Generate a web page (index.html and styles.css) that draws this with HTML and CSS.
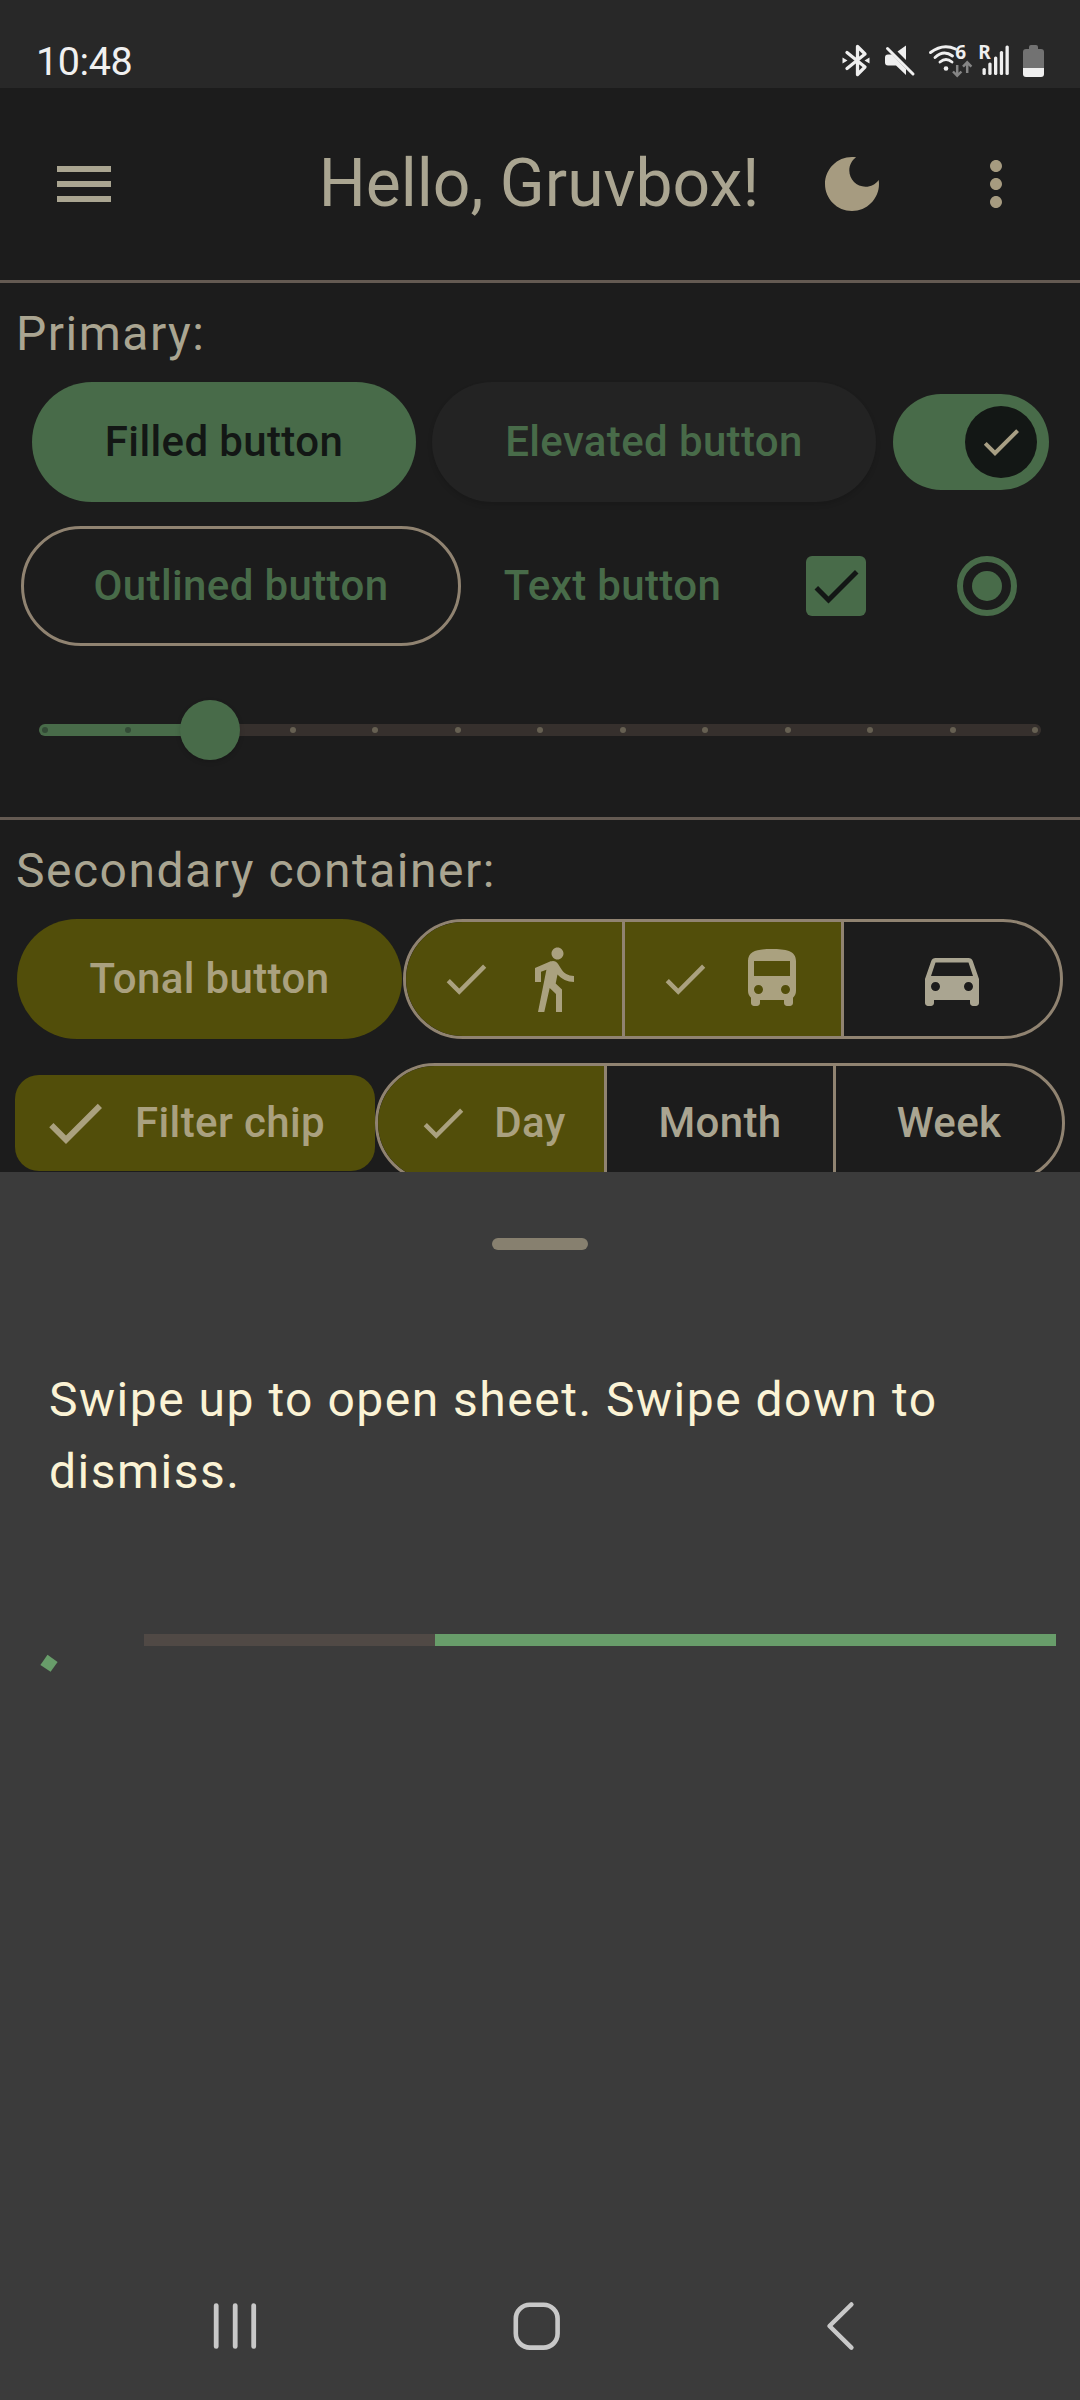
FILE: index.html
```html
<!DOCTYPE html>
<html lang="en">
<head>
<meta charset="utf-8">
<title>Hello, Gruvbox!</title>
<link rel="stylesheet" href="styles.css">
</head>
<body>
<svg class="defs" aria-hidden="true">
  <symbol id="check" viewBox="0 0 24 24"><path d="M9 16.170L4.830 12l-1.420 1.410L9 19 21 7l-1.410-1.410L9 16.170z"/></symbol>
</svg>
<div class="phone">
  <header class="status">
    <span class="clock">10:48</span>
    <svg class="status-icons" viewBox="0 0 210 40" width="210" height="40">
      <g fill="none" stroke="#efefef" stroke-width="3.300" stroke-linecap="round" stroke-linejoin="round">
        <path d="M7 12.500L25 27 17.500 34.500V6.500L25 14 7 28.500"/>
        <path d="M90.500 12.500Q103 3 115.500 9M95 17.500Q103.500 9.500 112.500 16M100 22Q106 17 112 22" stroke-width="2.900"/>
      </g>
      <g fill="#efefef">
        <path d="M2.500 17.500L7.500 20.500 2.500 23.500zM29.500 17.500L24.500 20.500 29.500 23.500z"/>
        <path d="M48 14.500H52L66 29V35L56 25.500H48Q45 25.500 45 22.500V17.500Q45 14.500 48 14.500zM57.500 11.500L66 5.500V20z"/>
        <circle cx="106" cy="28.500" r="2.300"/>
        <rect x="142.500" y="28" width="3.300" height="7" rx="1.500"/>
        <rect x="148.300" y="22.500" width="3.300" height="12.500" rx="1.500"/>
        <rect x="154" y="16.500" width="3.300" height="18.500" rx="1.500"/>
        <rect x="159.800" y="11" width="3.300" height="24" rx="1.500"/>
        <rect x="165.500" y="5.500" width="3.300" height="29.500" rx="1.500"/>
        <path d="M183 28H204V34Q204 37 201 37H186Q183 37 183 34z"/>
      </g>
      <path d="M47.500 8.500L73 34" stroke="#efefef" stroke-width="3" stroke-linecap="round"/>
      <path d="M183 28V12Q183 9 186 9H189V7Q189 5 191 5H196Q198 5 198 7V9H201Q204 9 204 12V28z" fill="#727272"/>
      <path d="M117.200 25V35.500M113 31.500L117.200 35.800 121.400 31.500M127.200 33V22.500M123 26.700L127.200 22.400 131.400 26.700" fill="none" stroke="#858585" stroke-width="2.500"/>
      <text x="115.200" y="19.300" class="tiny">6</text>
      <text x="138.300" y="19.300" class="tiny">R</text>
    </svg>
  </header>

  <div class="appbar">
    <svg class="i72" viewBox="0 0 24 24"><path d="M3 18h18v-2H3v2zm0-5h18v-2H3v2zm0-7v2h18V6H3z"/></svg>
    <h1 class="title">Hello, Gruvbox!</h1>
    <div class="actions">
      <svg class="i72" viewBox="0 0 24 24"><path d="M12 3c-4.970 0-9 4.030-9 9s4.030 9 9 9 9-4.030 9-9c0-.46-.04-.92-.1-1.360-.98 1.370-2.580 2.260-4.400 2.260-2.980 0-5.400-2.420-5.400-5.400 0-1.810.89-3.420 2.260-4.400-.44-.06-.9-.1-1.360-.1z"/></svg>
      <svg class="i72" viewBox="0 0 24 24"><path d="M12 8c1.100 0 2-.9 2-2s-.9-2-2-2-2 .9-2 2 .9 2 2 2zm0 2c-1.100 0-2 .9-2 2s.9 2 2 2 2-.9 2-2-.9-2-2-2zm0 6c-1.100 0-2 .9-2 2s.9 2 2 2 2-.9 2-2-.9-2-2-2z"/></svg>
    </div>
  </div>

  <section class="section primary">
    <h2 class="label">Primary:</h2>
    <div class="row row-a">
      <div class="btn filled">Filled button</div>
      <div class="btn elevated">Elevated button</div>
      <div class="switch"><div class="thumb"><svg class="i48"><use href="#check"/></svg></div></div>
    </div>
    <div class="row row-b">
      <div class="btn outlined">Outlined button</div>
      <div class="btn text">Text button</div>
      <div class="checkbox"><svg class="i60"><use href="#check"/></svg></div>
      <div class="radio"><div class="radio-dot"></div></div>
    </div>
    <div class="slider">
      <div class="track">
        <i class="tick on"></i><i class="tick on"></i><i class="knob"></i><i class="tick"></i><i class="tick"></i><i class="tick"></i><i class="tick"></i><i class="tick"></i><i class="tick"></i><i class="tick"></i><i class="tick"></i><i class="tick"></i><i class="tick"></i>
      </div>
    </div>
  </section>

  <section class="section secondary">
    <h2 class="label">Secondary container:</h2>
    <div class="row row-c">
      <div class="btn tonal">Tonal button</div>
      <div class="segments seg-icons">
        <div class="seg on"><svg class="i54"><use href="#check"/></svg><svg class="i72" viewBox="0 0 24 24"><path d="M13.500 5.500c1.100 0 2-.9 2-2s-.9-2-2-2-2 .9-2 2 .9 2 2 2zM9.800 8.900L7 23h2.100l1.800-8 2.100 2v6h2v-7.500l-2.100-2 .6-3C14.800 12 16.800 13 19 13v-2c-1.900 0-3.500-1-4.300-2.400l-1-1.600c-.4-.6-1-1-1.700-1-.3 0-.5.1-.8.1L6 8.300V13h2V9.600l1.800-.7"/></svg></div>
        <div class="seg on"><svg class="i54"><use href="#check"/></svg><svg class="i72" viewBox="0 0 24 24"><path d="M4 16c0 .88.39 1.670 1 2.220V20c0 .55.45 1 1 1h1c.55 0 1-.45 1-1v-1h8v1c0 .55.45 1 1 1h1c.55 0 1-.45 1-1v-1.780c.61-.55 1-1.340 1-2.220V6c0-3.500-3.580-4-8-4s-8 .5-8 4v10zm3.500 1c-.83 0-1.500-.67-1.500-1.500S6.670 14 7.500 14s1.500.67 1.500 1.500S8.330 17 7.500 17zm9 0c-.83 0-1.500-.67-1.500-1.500s.67-1.500 1.500-1.500 1.500.67 1.500 1.500-.67 1.500-1.500 1.500zm1.500-6H6V6h12v5z"/></svg></div>
        <div class="seg"><svg class="i72" viewBox="0 0 24 24"><path d="M18.920 6.010C18.720 5.420 18.160 5 17.500 5h-11c-.66 0-1.210.42-1.420 1.010L3 12v8c0 .55.45 1 1 1h1c.55 0 1-.45 1-1v-1h12v1c0 .55.45 1 1 1h1c.55 0 1-.45 1-1v-8l-2.080-5.990zM6.500 16c-.83 0-1.500-.67-1.500-1.500S5.670 13 6.500 13s1.500.67 1.500 1.500S7.330 16 6.500 16zm11 0c-.83 0-1.500-.67-1.500-1.500s.67-1.500 1.500-1.500 1.500.67 1.500 1.500-.67 1.500-1.500 1.500zM5 11l1.500-4.500h11L19 11H5z"/></svg></div>
      </div>
    </div>
    <div class="row row-d">
      <div class="chip"><svg class="i72"><use href="#check"/></svg><span class="cap">Filter chip</span></div>
      <div class="segments seg-dates">
        <div class="seg on"><svg class="i54"><use href="#check"/></svg><span class="cap">Day</span></div>
        <div class="seg"><span class="cap">Month</span></div>
        <div class="seg"><span class="cap">Week</span></div>
      </div>
    </div>
  </section>

  <main class="sheet">
    <div class="handle"></div>
    <p class="message">Swipe up to open sheet. Swipe down to dismiss.</p>
    <div class="progress">
      <svg class="spinner" viewBox="0 0 104 64" width="104" height="64"><path d="M7.500 44.700L17.600 52 10.600 61.800.4 55z"/></svg>
      <div class="bar"><div class="bar-fill"></div></div>
    </div>
    <nav class="nav">
      <svg viewBox="0 0 54 54" width="54" height="54"><path d="M8.200 4.600V45.400M27.200 4.600V45.400M45.700 4.600V45.400" stroke-width="4.800"/></svg>
      <svg viewBox="0 0 54 54" width="54" height="54"><rect x="2.800" y="3.700" width="41.800" height="42.900" rx="14" stroke-width="4.600"/></svg>
      <svg viewBox="0 0 54 54" width="54" height="54"><path d="M33.400 3.500L11.500 25 33.400 46.700" stroke-width="4.500"/></svg>
    </nav>
  </main>
</div>
</body>
</html>
```
FILE: styles.css
```css
* { box-sizing: border-box; }

body {
  margin: 0;
  background: #1c1c1c;
  font-family: Roboto, "Noto Sans", sans-serif;
  color: #aaa591;
}

h1, h2, p { margin: 0; font-weight: 400; }
svg { display: block; flex: none; fill: currentColor; }
.defs { position: absolute; width: 0; height: 0; }

.i48 { width: 48px; height: 48px; }
.i54 { width: 54px; height: 54px; }
.i60 { width: 60px; height: 60px; }
.i72 { width: 72px; height: 72px; }

.phone {
  width: 1080px;
  height: 2400px;
  overflow: hidden;
  display: flex;
  flex-direction: column;
}

/* Status bar */
.status {
  height: 88px;
  flex: none;
  background: #282828;
  display: flex;
  justify-content: space-between;
  padding: 0 30px 0 36px;
}
.clock {
  padding-top: 39px;
  font-size: 39.500px;
  line-height: 46px;
  letter-spacing: -0.400px;
  color: #f0f0f0;
}
.status-icons { margin-top: 40px; }
.tiny { font: 700 19px "Noto Sans", sans-serif; fill: #efefef; }

/* App bar */
.appbar {
  height: 192px;
  flex: none;
  display: flex;
  align-items: center;
  justify-content: space-between;
  padding: 0 48px;
}
.title { font-size: 66px; line-height: 84px; padding: 0 20px 0 162px; }
.actions { display: flex; gap: 72px; color: #a69b80; }

/* Sections */
.section {
  flex: none;
  border-top: 3px solid #645a52;
  padding-top: 15px;
}
.primary { height: 537px; }
.secondary { height: 355px; overflow: hidden; }
.label {
  padding-left: 16px;
  margin-bottom: 12px;
  font-size: 48px;
  line-height: 72px;
  letter-spacing: 1.500px;
}
.row { display: flex; height: 120px; align-items: center; margin-bottom: 24px; }
.row-a { padding-left: 32px; gap: 16px; }
.row-b { padding-left: 21px; }
.row-c { padding-left: 17px; gap: 1px; }
.row-d { padding-left: 15px; }

.btn {
  height: 120px;
  padding-bottom: 2px;
  border-radius: 60px;
  display: flex;
  align-items: center;
  justify-content: center;
  font-size: 42px;
  font-weight: 500;
  letter-spacing: 0.370px;
  white-space: nowrap;
  color: #486b49;
}
.filled { width: 384px; background: #486b49; color: #131715; }
.elevated { width: 444px; background: #232323; box-shadow: 0 3px 5px rgba(0, 0, 0, 0.130); }
.outlined { width: 440px; border: 3px solid #908371; }
.text { width: 303px; margin-right: -1px; }
.tonal { width: 385px; background: #524e0a; color: #aaa17f; }

.switch {
  width: 156px;
  height: 96px;
  margin-left: 1px;
  padding: 12px;
  border-radius: 48px;
  background: #486b49;
  display: flex;
  justify-content: flex-end;
}
.thumb {
  width: 72px;
  height: 72px;
  border-radius: 50%;
  background: #131715;
  color: #a89f84;
  display: flex;
  align-items: center;
  justify-content: center;
}
.checkbox {
  width: 60px;
  height: 60px;
  margin-left: 43px;
  border-radius: 6px;
  background: #486b49;
  color: #131715;
}
.radio {
  width: 60px;
  height: 60px;
  margin-left: 91px;
  border: 6px solid #486b49;
  border-radius: 50%;
  display: flex;
  align-items: center;
  justify-content: center;
}
.radio-dot { width: 30px; height: 30px; border-radius: 50%; background: #486b49; }

.slider { padding: 54px 39px 0; }
.track {
  height: 12px;
  padding: 0 3px;
  border-radius: 6px;
  background: linear-gradient(90deg, #486b49 171px, #36302d 171px);
  display: flex;
  align-items: center;
  justify-content: space-between;
}
.tick { width: 6px; height: 6px; border-radius: 50%; background: #666052; }
.tick.on { background: #334a36; }
.knob {
  width: 60px;
  height: 60px;
  margin: 0 -27px;
  border-radius: 50%;
  background: #486b49;
  box-shadow: 0 2px 5px rgba(0, 0, 0, 0.150);
}

/* Segmented buttons and chip */
.segments {
  height: 120px;
  border: 3px solid #908371;
  border-radius: 60px;
  overflow: hidden;
  display: flex;
  font-size: 42px;
  font-weight: 500;
  letter-spacing: 0.370px;
}
.seg-icons { width: 660px; }
.seg-dates { width: 690px; }
.seg {
  flex: 1;
  display: flex;
  align-items: center;
  justify-content: center;
  gap: 24px;
}
.seg + .seg { border-left: 3px solid #908371; }
.seg-icons .seg:first-child, .seg-dates .seg:first-child { flex: none; }
.seg-icons .seg:first-child { width: 216px; }
.seg-dates .seg:first-child { width: 226px; }
.seg.on { background: #524e0a; color: #aaa17f; }
.cap { padding-bottom: 2px; }
.chip {
  width: 360px;
  height: 96px;
  padding-left: 24px;
  border-radius: 24px;
  background: #524e0a;
  color: #aaa17f;
  display: flex;
  align-items: center;
  gap: 24px;
  font-size: 42px;
  font-weight: 500;
  letter-spacing: 0.370px;
}

/* Bottom sheet */
.sheet {
  flex: 1;
  background: #3b3b3b;
  padding-top: 66px;
  display: flex;
  flex-direction: column;
}
.handle { width: 96px; height: 12px; border-radius: 6px; background: #87806f; align-self: center; }
.message {
  margin-top: 114px;
  padding: 0 48px 0 49px;
  font-size: 48px;
  line-height: 72px;
  letter-spacing: 1.500px;
  color: #fbf3d5;
}
.progress { margin-top: 102px; padding: 0 24px 0 40px; display: flex; align-items: center; height: 64px; }
.spinner { color: #689d6a; }
.bar { flex: 1; height: 12px; background: #504945; padding-left: 291px; align-self: flex-start; margin-top: 24px; }
.bar-fill { height: 12px; background: #689d6a; }
.nav {
  margin-top: auto;
  height: 144px;
  padding: 0 208px;
  display: flex;
  align-items: center;
  justify-content: space-between;
}
.nav svg { fill: none; stroke: #c8c8c8; stroke-linecap: round; stroke-linejoin: round; }
```
